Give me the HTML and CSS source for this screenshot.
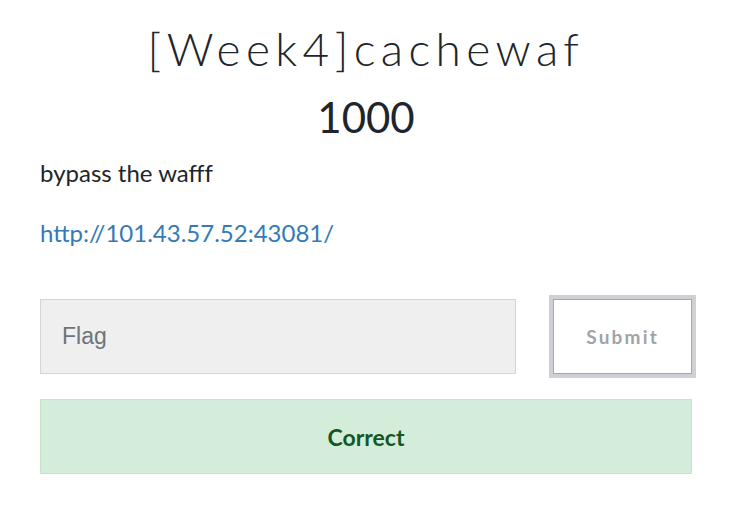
FILE: index.html
```html
<!DOCTYPE html>
<html>
<head>
<meta charset="utf-8">
<link rel="stylesheet" href="styles.css">
</head>
<body>
<div class="challenge">
  <h3 class="challenge-name">[Week4]cachewaf</h3>
  <h4 class="challenge-value">1000</h4>
  <p class="challenge-desc">bypass the wafff</p>
  <p class="challenge-link"><a href="#">http://101.43.57.52:43081/</a></p>
  <div class="submit-row">
    <input class="flag-input" type="text" placeholder="Flag">
    <button class="submit-btn">Submit</button>
  </div>
  <div class="result-box">Correct</div>
</div>
</body>
</html>
```
FILE: styles.css
```css
html, body {
  margin: 0;
  padding: 0;
  background: #ffffff;
}
.challenge {
  width: 652px;
  margin-left: 40px;
  padding-top: 21px;
  font-family: "Lato", "Liberation Sans", sans-serif;
  color: #212529;
}
.challenge-name {
  margin: 0;
  text-align: center;
  font-family: "Lato", sans-serif;
  font-weight: 300;
  font-size: 46px;
  line-height: 55px;
  letter-spacing: 5.4px;
  color: #212529;
}
.challenge-value {
  margin: 16px 0 0;
  text-align: center;
  font-weight: 400;
  font-size: 42px;
  line-height: 50px;
  color: #212529;
}
.challenge-desc {
  margin: 16px 0 0;
  font-size: 24px;
  line-height: 29px;
}
.challenge-link {
  margin: 31px 0 0;
  font-size: 24px;
  line-height: 29px;
}
.challenge-link a {
  color: #337ab7;
  text-decoration: none;
}
.submit-row {
  display: flex;
  gap: 37px;
  margin-top: 52px;
}
.flag-input {
  box-sizing: border-box;
  width: 477px;
  height: 75px;
  margin: 0;
  padding: 0 21px;
  border: 1px solid #d3d6d9;
  background: #efefef;
  font-family: "Liberation Sans", Arial, sans-serif;
  font-size: 23px;
  color: #495057;
  outline: none;
  border-radius: 0;
}
.flag-input::placeholder {
  color: #6c757d;
  opacity: 1;
}
.submit-btn {
  box-sizing: border-box;
  width: 139px;
  height: 75px;
  margin: 0;
  padding: 0;
  border: 1px solid #a4a8ac;
  background: #ffffff;
  box-shadow: 0 0 0 4px #cdd1d5;
  font-family: "Lato", sans-serif;
  font-weight: 700;
  font-size: 19px;
  letter-spacing: 2.2px;
  color: #a0a4a9;
  border-radius: 0;
}
.result-box {
  box-sizing: border-box;
  margin-top: 25px;
  height: 75px;
  display: flex;
  align-items: center;
  justify-content: center;
  background: #d4edda;
  border: 1px solid #c3e6cb;
  color: #155724;
  font-weight: 700;
  font-size: 23px;
}
```
